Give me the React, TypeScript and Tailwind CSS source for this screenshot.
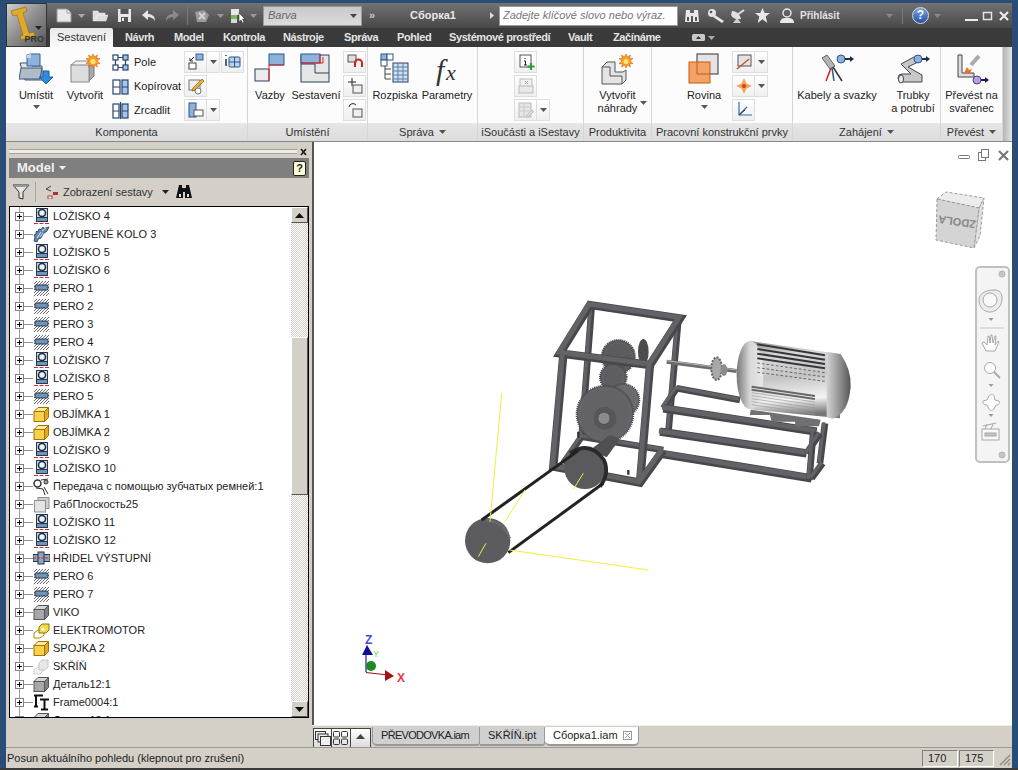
import React from 'react';

const font = "font-['Liberation_Sans',sans-serif]";

const Arrow = ({ color = '#555' }: { color?: string }) => (
  <svg width="7" height="4" viewBox="0 0 7 4" className="shrink-0"><path d="M0 0h7L3.500 4z" fill={color} /></svg>
);

// ---- tree icons ----
const Bearing = () => (
  <svg width="17" height="17" viewBox="0 0 17 17">
    <rect x="3" y="0" width="12" height="14" fill="#27384f" />
    <rect x="4" y="1" width="10" height="8" fill="#c9d4de" />
    <circle cx="9" cy="5" r="3.500" fill="#eef3f7" stroke="#1c2c42" strokeWidth="1.500" />
    <rect x="4" y="10" width="10" height="3" fill="#6f95bd" />
    <path d="M1 15.500h16" stroke="#c9302c" strokeDasharray="4 1.500" />
  </svg>
);
const Gear = () => (
  <svg width="17" height="17" viewBox="0 0 17 17">
    <path d="M1 15l1-4-1-2 2-1V5.500h2L6 3l2 .5L10 1l1 1.500L16 1l-2 4-4 3-2 4-3 1-1 3z" fill="#5f86b4" stroke="#22364f" strokeWidth=".8" />
    <path d="M4 12l4-6M7 11l3-4M9 5l4-3" stroke="#d8e3ee" />
  </svg>
);
const KeyIcon = () => (
  <svg width="17" height="17" viewBox="0 0 17 17">
    <path d="M1 4l3-3M1 7l6-6M1 10l9-9M1 13L13 1M1 16L16 1M4 16L16 4M7 16l9-9M10 16l6-6M13 16l3-3" stroke="#444" strokeWidth=".8" />
    <rect x="2" y="5" width="13" height="5" rx="1" fill="#6f94b8" stroke="#25364c" />
  </svg>
);
const Cube = ({ face, top, side, line }: { face: string; top: string; side: string; line: string }) => (
  <svg width="17" height="17" viewBox="0 0 17 17">
    <path d="M1 5.500L5 1.500h10.500l-4 4z" fill={top} stroke={line} />
    <path d="M11.500 5.500l4-4v10l-4 4z" fill={side} stroke={line} />
    <rect x="1" y="5.500" width="10.500" height="10" fill={face} stroke={line} />
  </svg>
);
const GrayCube = () => <Cube face="#a8a8a8" top="#d4d4d4" side="#808080" line="#555" />;
const YellowCube = () => <Cube face="#f7d24a" top="#fdeb9a" side="#e0ac28" line="#a66f00" />;
const SmallYellow = () => (
  <svg width="17" height="17" viewBox="0 0 17 17">
    <path d="M1 11l4-3h6v5l-4 3H1z" fill="#fff" stroke="#b48a00" />
    <path d="M6 5l3-3h7v6l-3 3H6z" fill="#f3d94c" stroke="#8a7400" />
    <circle cx="10" cy="7" r="1.500" fill="#fff" />
  </svg>
);
const Ghost = () => (
  <svg width="17" height="17" viewBox="0 0 17 17">
    <path d="M1 12l4-3h5v4l-3 3H1z" fill="#f2f2f2" stroke="#d0d0d0" />
    <path d="M6 5l3-3h6v7l-3 3H6z" fill="#e8e8e8" stroke="#c4c4c4" />
  </svg>
);
const Belt = () => (
  <svg width="17" height="17" viewBox="0 0 17 17">
    <circle cx="4.500" cy="5.500" r="3.500" fill="#fff" stroke="#333" strokeWidth="1.500" />
    <circle cx="13" cy="4" r="2" fill="#9ab" stroke="#333" />
    <path d="M3 10l7 1M8 2l7-1M10 11l2 6M11 9l4 7" stroke="#333" fill="none" />
  </svg>
);
const PlaneIcon = () => (
  <svg width="17" height="17" viewBox="0 0 17 17">
    <rect x="5" y="1.500" width="11" height="11" fill="#d0d0d0" stroke="#8f8f8f" />
    <rect x="1.500" y="4.500" width="11" height="11.500" fill="#e4e4e4" stroke="#8f8f8f" />
  </svg>
);
const Shaft = () => (
  <svg width="17" height="17" viewBox="0 0 17 17">
    <rect x="0" y="4.500" width="17" height="7" fill="#8ea5c2" stroke="#22324a" />
    <rect x="5" y="2" width="6" height="12" fill="#8ea5c2" stroke="#22324a" />
    <path d="M0 8h17" stroke="#c9302c" strokeDasharray="3 1" />
  </svg>
);
const Frame = () => (
  <svg width="17" height="17" viewBox="0 0 17 17">
    <path d="M1 1.500h9M3 1.500v11M1 12.500h4M7 5.500h9M11.500 5.500v10M8 15.500h7" stroke="#111" strokeWidth="2" fill="none" />
  </svg>
);

const icons: Record<string, () => React.ReactElement> = {
  b: Bearing, g: Gear, k: KeyIcon, c: GrayCube, y: YellowCube, e: SmallYellow, s: Ghost, t: Belt, p: PlaneIcon, h: Shaft, f: Frame,
};

const treeRows: [string, string][] = [
  ['b', 'LOŽISKO 4'], ['g', 'OZYUBENÉ KOLO 3'], ['b', 'LOŽISKO 5'], ['b', 'LOŽISKO 6'],
  ['k', 'PERO 1'], ['k', 'PERO 2'], ['k', 'PERO 3'], ['k', 'PERO 4'],
  ['b', 'LOŽISKO 7'], ['b', 'LOŽISKO 8'], ['k', 'PERO 5'], ['y', 'OBJÍMKA 1'], ['y', 'OBJÍMKA 2'],
  ['b', 'LOŽISKO 9'], ['b', 'LOŽISKO 10'], ['t', 'Передача с помощью зубчатых ремней:1'], ['p', 'РабПлоскость25'],
  ['b', 'LOŽISKO 11'], ['b', 'LOŽISKO 12'], ['h', 'HŘIDEL VÝSTUPNÍ'], ['k', 'PERO 6'], ['k', 'PERO 7'],
  ['c', 'VIKO'], ['e', 'ELEKTROMOTOR'], ['y', 'SPOJKA 2'], ['s', 'SKŘÍŇ'], ['c', 'Деталь12:1'], ['f', 'Frame0004:1'], ['c', 'Деталь13:1'],
];

const TreeRow = ({ icon, label }: { icon: string; label: string }) => {
  const Icon = icons[icon];
  return (
    <div className="flex items-center h-[18px] relative shrink-0">
      <div className="absolute left-[9px] top-0 bottom-0 border-l border-[#a0a0a0]" />
      <div className="relative ml-[5px] w-[9px] h-[9px] border border-[#808080] bg-white flex items-center justify-center">
        <svg width="7" height="7" viewBox="0 0 7 7"><path d="M1 3.500h5M3.500 1v5" stroke="#000" /></svg>
      </div>
      <div className="w-[9px] border-t border-[#909090]" />
      <div className="w-[17px] h-[17px] shrink-0"><Icon /></div>
      <span className="ml-[3px] text-[11px] text-[#222] whitespace-nowrap">{label}</span>
    </div>
  );
};

// ---- ribbon icons ----
const UmistitIcon = () => (
  <svg width="34" height="32" viewBox="0 0 34 32">
    <path d="M1 10h10l2 3h10v14H6z" fill="#e4e4e4" stroke="#3e5674" />
    <path d="M8 2l4-1h9v12H8z" fill="#8db2dc" stroke="#3a5f8c" />
    <path d="M8 2l4-1v4H8z" fill="#c4d8ee" />
    <path d="M0 26l2-11h21l-2 11z" fill="#aebccb" stroke="#3e5674" />
    <path d="M24 18h6v6h4l-7 7-7-7h4z" fill="#2f8be0" stroke="#1b5e9f" />
  </svg>
);
const CubeStar = ({ w = 34 }: { w?: number }) => (
  <svg width={w} height="32" viewBox="0 0 34 32">
    <path d="M3 12l5-4h18v2l-5 4z" fill="#f2f2f2" stroke="#888" />
    <path d="M21 14l5-4v13l-5 5z" fill="#aaa" stroke="#777" />
    <rect x="3" y="12" width="18" height="17" fill="#ddd" stroke="#888" />
    <path d="M25 1l1.500 3 3-2-1 3.500H32l-3 2.500 3 2.500-3.500.5 1 3-3-2-1.500 3-1.500-3-3 2 1-3-3.500-.5 3-2.500-3-2.500h3.500l-1-3.500 3 2z" fill="#f7a21b" stroke="#d9480f" strokeWidth=".5" />
    <circle cx="25" cy="8.500" r="2.500" fill="#ffe680" />
  </svg>
);
const SmallGrid = ({ kind }: { kind: string }) => (
  <svg width="17" height="17" viewBox="0 0 17 17" fill="#fff" stroke="#25456e" strokeWidth="1.200">
    {kind === 'pole' && <>
      <rect x="1" y="1" width="5" height="5" /><rect x="11" y="1" width="5" height="5" fill="#a9c5e6" />
      <rect x="1" y="11" width="5" height="5" /><rect x="11" y="11" width="5" height="5" fill="#a9c5e6" />
      <path d="M6 3.500h5M3.500 6v5M13.500 6v5M6 13.500h5" />
    </>}
    {kind === 'kop' && <>
      <rect x="1" y="2" width="7" height="14" /><rect x="10" y="2" width="6" height="14" fill="#a9c5e6" />
      <path d="M1 9h7M10 9h6" />
    </>}
    {kind === 'zrc' && <>
      <rect x="1" y="2" width="6" height="14" /><rect x="10" y="2" width="6" height="14" fill="#a9c5e6" />
      <path d="M8.500 0v17M1 9h6M10 9h6" />
    </>}
  </svg>
);
const Sb = ({ children, arrow, className = '' }: { children?: React.ReactNode; arrow?: boolean; className?: string }) => (
  <div className={`flex h-[22px] shrink-0 ${className}`}>
    <div className="w-[23px] h-[22px] border border-[#dedede] bg-gradient-to-b from-white to-[#efefef] flex items-center justify-center">{children}</div>
    {arrow && <div className="w-[13px] h-[22px] border border-l-0 border-[#dedede] bg-gradient-to-b from-white to-[#efefef] flex items-center justify-center"><Arrow /></div>}
  </div>
);
const G = ({ children }: { children: React.ReactNode }) => (
  <svg width="18" height="18" viewBox="0 0 18 18" fill="none">{children}</svg>
);
const Big = ({ w, ml = 0, label, icon, drop }: { w: number; ml?: number; label: React.ReactNode; icon: React.ReactNode; drop?: boolean }) => (
  <div style={{ width: w, marginLeft: ml }} className="shrink-0 flex flex-col items-center pt-[6px]">
    <div className="h-[36px] flex items-start justify-center">{icon}</div>
    <div className="text-[11px] leading-[13px] text-center text-[#222] whitespace-nowrap">{label}</div>
    {drop && <div className="mt-[3px]"><Arrow /></div>}
  </div>
);
const Panel = ({ w, title, arrow, children }: { w: number; title: string; arrow?: boolean; children: React.ReactNode }) => (
  <div style={{ width: w }} className="shrink-0 flex flex-col border-r border-[#d6d6d6]">
    <div className="h-[76px] flex">{children}</div>
    <div className="h-[18px] bg-gradient-to-b from-[#e6e6e6] to-[#dcdcdc] flex items-center justify-center gap-[5px] text-[11px] text-[#333] whitespace-nowrap">
      {title}{arrow && <Arrow />}
    </div>
  </div>
);
const SmallLabel = ({ kind, label }: { kind: string; label: string }) => (
  <div className="h-[24px] flex items-center gap-[5px] text-[11px] text-[#222] whitespace-nowrap"><SmallGrid kind={kind} />{label}</div>
);
const BtnCol = ({ children, ml }: { children: React.ReactNode; ml: number }) => (
  <div style={{ marginLeft: ml }} className="shrink-0 flex flex-col gap-[2px] pt-[4px]">{children}</div>
);

const Ribbon = () => (
  <div className="h-[94px] flex bg-[#fcfcfc] shrink-0">
    <Panel w={242} title="Komponenta">
      <Big w={40} ml={10} label="Umístit" icon={<UmistitIcon />} drop />
      <Big w={40} ml={9} label="Vytvořit" icon={<CubeStar />} />
      <div className="ml-[7px] w-[72px] shrink-0 pt-[3px]">
        <SmallLabel kind="pole" label="Pole" /><SmallLabel kind="kop" label="Kopírovat" /><SmallLabel kind="zrc" label="Zrcadlit" />
      </div>
      <div className="shrink-0 flex flex-col gap-[2px] pt-[4px]">
        <div className="flex gap-[1px]">
          <Sb arrow><G><rect x="9" y="1" width="7" height="6" fill="#8db2dc" stroke="#3a5f8c" /><rect x="2" y="10" width="7" height="6" fill="#fff" stroke="#444" /><path d="M3 8l4-4M3 5v3h3" stroke="#333" /></G></Sb>
          <Sb><G><path d="M2 2v1M2 6v7" stroke="#234" strokeWidth="1.500" /><rect x="5" y="4" width="11" height="10" rx="1" fill="#bcd3ec" stroke="#2c5587" /><path d="M5 9h11M10.500 4v10" stroke="#2c5587" /></G></Sb>
        </div>
        <Sb><G><rect x="2" y="3" width="11" height="10" fill="#eee" stroke="#777" /><path d="M6 11l9-9 2 2-9 9-3 1z" fill="#e8b23a" stroke="#8a5a00" strokeWidth=".7" /><circle cx="11" cy="14" r="3" fill="#fff" stroke="#777" /></G></Sb>
        <Sb arrow><G><rect x="2" y="2" width="7" height="14" fill="#8db2dc" stroke="#2c5587" /><rect x="7" y="9" width="9" height="6" fill="#fff" stroke="#555" /></G></Sb>
      </div>
    </Panel>
    <Panel w={120} title="Umístění">
      <Big w={40} ml={2} label="Vazby" icon={
        <svg width="32" height="32" viewBox="0 0 32 32"><rect x="15" y="1" width="15" height="11" fill="#8db2dc" stroke="#2c5587" /><rect x="1" y="16" width="14" height="12" fill="#ececec" stroke="#2c3f58" /><path d="M15 12h15M15 12v16" stroke="#e02020" /></svg>
      } />
      <Big w={52} label="Sestavení" icon={
        <svg width="32" height="32" viewBox="0 0 32 32"><rect x="1" y="2" width="28" height="27" fill="#e6e6e6" stroke="#2c3f58" /><path d="M1 11h14v9h14" fill="none" stroke="#2c3f58" /><rect x="1" y="1" width="19" height="9" fill="#8db2dc" stroke="#2c5587" /><path d="M1 10h19V1M20 10h3V4" stroke="#e02020" fill="none" /></svg>
      } />
      <BtnCol ml={1}>
        <Sb><G><rect x="2" y="2" width="8" height="7" fill="#ddd" stroke="#555" /><path d="M9 14v-4a3.500 3.500 0 017 0v4" stroke="#d02020" strokeWidth="2" /></G></Sb>
        <Sb><G><path d="M6 1v8M2 5h8" stroke="#222" /><rect x="7" y="8" width="9" height="8" fill="#eee" stroke="#555" /></G></Sb>
        <Sb><G><path d="M3 6a4 4 0 017-2" stroke="#222" /><rect x="7" y="8" width="9" height="8" fill="#eee" stroke="#555" /></G></Sb>
      </BtnCol>
    </Panel>
    <Panel w={110} title="Správa" arrow>
      <Big w={48} ml={3} label="Rozpiska" icon={
        <svg width="32" height="32" viewBox="0 0 32 32"><rect x="2" y="1" width="6" height="6" fill="#8db2dc" stroke="#2c5587" /><rect x="8" y="1" width="6" height="6" fill="#fff" stroke="#2c5587" /><rect x="2" y="7" width="6" height="6" fill="#fff" stroke="#2c5587" /><path d="M6 13v13M6 16h6M6 21h6M6 26h6" stroke="#444" /><rect x="14" y="10" width="15" height="19" fill="#cfe0f2" stroke="#2c3f58" /><path d="M14 14h15M14 18h15M14 22h15M14 26h15M19 10v19M24 10v19" stroke="#5b7ea6" /></svg>
      } />
      <Big w={56} label="Parametry" icon={
        <svg width="36" height="35" viewBox="0 0 36 35"><text x="7" y="27" fontFamily="Liberation Serif" fontStyle="italic" fontSize="30" fill="#333">f</text><text x="17" y="27" fontFamily="Liberation Serif" fontStyle="italic" fontSize="22" fill="#333">x</text></svg>
      } />
    </Panel>
    <Panel w={106} title="iSoučásti a iSestavy">
      <BtnCol ml={36}>
        <Sb><G><rect x="3" y="2" width="11" height="12" fill="#fff" stroke="#555" /><path d="M8 5v1M7 8h1.500v4M7 12h3" stroke="#222" /><path d="M14 10v7M10.500 13.500h7" stroke="#2e9b3a" strokeWidth="2" /></G></Sb>
        <Sb><G><rect x="3" y="2" width="12" height="8" fill="#f0f0f0" stroke="#bbb" /><rect x="2" y="9" width="14" height="7" fill="#e8e8e8" stroke="#bbb" /><path d="M8 4l3 3M11 4L8 7" stroke="#aaa" /></G></Sb>
        <Sb arrow><G><rect x="2" y="2" width="12" height="14" fill="#e6e6e6" stroke="#bbb" /><path d="M2 6h12M2 10h12M7 2v14" stroke="#ccc" /><path d="M9 15l6-6 1.500 1.500-6 6z" fill="#ddd" stroke="#bbb" /></G></Sb>
      </BtnCol>
    </Panel>
    <Panel w={68} title="Produktivita">
      <div className="w-full relative">
        <Big w={67} label={<>Vytvořit<br />náhrady</>} icon={
          <svg width="36" height="34" viewBox="0 0 36 34"><path d="M2 14l5-5h8v10h8l3-2v10l-4 4H2z" fill="#e4e4e4" stroke="#555" /><path d="M2 14h8v9h12v8" fill="none" stroke="#555" /><path d="M26 1l1.500 3 3-2-1 3.500H33l-3 2.500 3 2.500-3.500.5 1 3-3-2-1.500 3-1.500-3-3 2 1-3-3.500-.5 3-2.500-3-2.500h3.500l-1-3.500 3 2z" fill="#f7a21b" stroke="#d9480f" strokeWidth=".5" /><circle cx="26" cy="8.500" r="2.500" fill="#ffe680" /></svg>
        } />
        <div className="absolute left-[56px] top-[54px]"><Arrow /></div>
      </div>
    </Panel>
    <Panel w={141} title="Pracovní konstrukční prvky">
      <Big w={40} ml={32} label="Rovina" icon={
        <svg width="32" height="32" viewBox="0 0 32 32"><rect x="9" y="1" width="21" height="20" fill="#e4e4e8" stroke="#333" /><rect x="1" y="9" width="21" height="21" fill="#f3a365" stroke="#c8590f" /><path d="M9 9v12h13" fill="none" stroke="#c8590f" /></svg>
      } drop />
      <BtnCol ml={8}>
        <Sb arrow><G><rect x="3" y="2" width="13" height="11" fill="#e4e4e4" stroke="#555" /><path d="M2 16L14 6" stroke="#c0562a" strokeWidth="1.500" /></G></Sb>
        <Sb arrow><G><path d="M9 1l2.500 5.500L17 9l-5.500 2.500L9 17l-2.500-5.500L1 9l5.500-2.500z" fill="#f5a45a" /><circle cx="9" cy="9" r="2" fill="#c8402a" /></G></Sb>
        <Sb><G><path d="M4 1v13h13M4 14l8-8" stroke="#2c6fb0" strokeWidth="1.200" /><path d="M4 14l6-5" stroke="#333" /></G></Sb>
      </BtnCol>
    </Panel>
    <Panel w={148} title="Zahájení" arrow>
      <Big w={88} label="Kabely a svazky" icon={
        <svg width="34" height="34" viewBox="0 0 34 34"><path d="M2 5l5-3 8 11-5 3z" fill="#b5b5b5" stroke="#666" /><path d="M11 15l-5 13" stroke="#d02020" strokeWidth="1.500" /><path d="M12 15l2 13" stroke="#2c5587" strokeWidth="1.500" /><path d="M13 14l9 14" stroke="#333" strokeWidth="1.500" /><circle cx="21" cy="6" r="4" fill="#8db2dc" stroke="#2c5587" /><path d="M25 6h6" stroke="#1a2d4a" strokeWidth="2" /><path d="M30 3l4 3-4 3z" fill="#1a2d4a" /></svg>
      } />
      <Big w={54} ml={5} label={<>Trubky<br />a potrubí</>} icon={
        <svg width="34" height="34" viewBox="0 0 34 34"><path d="M5 11L18 4l4 5-10 5 14 8v7H6a3 3 0 010-8h9z" fill="#c8c8cc" stroke="#444" /><ellipse cx="5" cy="26" rx="2.500" ry="4" fill="#eee" stroke="#444" /><circle cx="22" cy="6" r="4" fill="#8db2dc" stroke="#2c5587" /><path d="M26 6h5" stroke="#1a2d4a" strokeWidth="2" /><path d="M30 3l4 3-4 3z" fill="#1a2d4a" /></svg>
      } />
    </Panel>
    <Panel w={62} title="Převést" arrow>
      <Big w={61} label={<>Převést na<br />svařenec</>} icon={
        <svg width="34" height="34" viewBox="0 0 34 34"><path d="M3 2h4v18h12v4H3z" fill="#ddd" stroke="#444" /><path d="M9 20l3-6 2 3 3-1-2 4z" fill="#f0701e" /><path d="M16 12l8-9" stroke="#aaa" strokeWidth="4" /><circle cx="22" cy="27" r="4" fill="#b9a0dc" stroke="#5a3a96" /><path d="M26 27h5" stroke="#1a1a5a" strokeWidth="2" /><path d="M30 24l4 3-4 3z" fill="#1a1a5a" /></svg>
      } />
    </Panel>
    <div className="flex-1 bg-gradient-to-r from-[#b4b4b4] to-[#e4e4e4]" />
  </div>
);

// ---- title row ----
const Qa = ({ w, children }: { w: number; children?: React.ReactNode }) => (
  <div style={{ width: w }} className="h-full shrink-0 flex items-center justify-center">{children}</div>
);
const tabNames = [['Návrh', 49], ['Model', 49], ['Kontrola', 60], ['Nástroje', 61], ['Správa', 53], ['Pohled', 52], ['Systémové prostředí', 119], ['Vault', 45], ['Začínáme', 79]] as [string, number][];

const TitleRow = () => (
  <div className="h-[25px] flex items-center bg-gradient-to-b from-[#727272] to-[#484848] shrink-0 pl-[7px]">
    <Qa w={20}><svg width="16" height="15" viewBox="0 0 16 15"><path d="M1 1h10l4 4v9H1z" fill="#e8e8e8" stroke="#999" /><path d="M11 1v4h4" fill="#fff" stroke="#999" /></svg></Qa>
    <Qa w={14}><Arrow color="#aaa" /></Qa>
    <Qa w={24}><svg width="16" height="13" viewBox="0 0 16 13"><path d="M1 12V2h5l1 2h6v2H5l-2 6zM3 12l2-6h11l-2 6z" fill="#ddd" stroke="#eee" strokeWidth=".5" /></svg></Qa>
    <Qa w={24}><svg width="15" height="15" viewBox="0 0 15 15"><path d="M1 1h13v13H1z" fill="#e8e8e8" /><rect x="3.500" y="1" width="8" height="5" fill="#555" /><rect x="4" y="9" width="7" height="5" fill="#555" /><rect x="5" y="10" width="2" height="3" fill="#eee" /></svg></Qa>
    <Qa w={24}><svg width="15" height="12" viewBox="0 0 15 12"><path d="M7 0L1 5l6 5V7c3 0 5 1 7 4 0-5-3-7-7-7z" fill="#e6e6e6" /></svg></Qa>
    <Qa w={24}><svg width="15" height="12" viewBox="0 0 15 12"><path d="M8 0l6 5-6 5V7C5 7 3 8 1 11c0-5 3-7 7-7z" fill="#8a8a8a" /></svg></Qa>
    <div className="w-px h-[18px] bg-[#7a7a7a] ml-[3px] mr-[6px]" />
    <Qa w={16}><svg width="16" height="14" viewBox="0 0 16 14"><path d="M1 3l9-2 5 5-3 7H3z" fill="#9a9a9a" /><path d="M5 4l6 6M11 4l-6 6" stroke="#d4d4d4" strokeWidth="2" /></svg></Qa>
    <Qa w={20}><Arrow color="#999" /></Qa>
    <Qa w={16}><svg width="16" height="16" viewBox="0 0 16 16"><rect x="1" y="1" width="8" height="6" fill="#e8e8e8" /><rect x="1" y="7" width="6" height="4" fill="#6fbf4a" /><rect x="1" y="11" width="6" height="4" fill="#d8d8d8" /><path d="M9 5v9l2-2 1.500 3 1.500-1-1.500-3H15z" fill="#fff" stroke="#222" strokeWidth=".5" /></svg></Qa>
    <Qa w={14}><Arrow color="#999" /></Qa>
    <div className="w-[99px] h-[20px] ml-[3px] shrink-0 bg-gradient-to-b from-[#c8c8c8] to-[#dcdcdc] border border-[#9a9a9a] flex items-center justify-between pl-[4px] pr-[4px] text-[11px] italic text-[#666]">Barva<Arrow color="#444" /></div>
    <div className="w-[20px] shrink-0 text-center text-[11px] font-bold text-[#ccc] leading-none">»</div>
    <div className="w-[102px] shrink-0 text-center text-[11px] font-bold text-[#e8e8e8]">Сборка1</div>
    <svg width="4" height="7" viewBox="0 0 4 7" className="ml-[6px] mr-[5px] shrink-0"><path d="M0 0l4 3.500L0 7z" fill="#ddd" /></svg>
    <div className="w-[179px] h-[20px] shrink-0 bg-white border border-[#9a9a9a] flex items-center pl-[3px] text-[11px] italic text-[#777] whitespace-nowrap overflow-hidden">Zadejte klíčové slovo nebo výraz.</div>
    <Qa w={28}><svg width="16" height="16" viewBox="0 0 16 16" fill="#e8e8e8"><path d="M2 2h4v3h4V2h4l1 12H9V8H7v6H1z" /><path d="M3 9h2v4H3zM11 9h2v4h-2z" fill="#555" /></svg></Qa>
    <Qa w={20}><svg width="18" height="15" viewBox="0 0 18 15"><circle cx="5" cy="5" r="4" fill="#e4e4e4" /><circle cx="4" cy="4" r="1.300" fill="#555" /><path d="M8 7l9 6-2 2-9-6z" fill="#e4e4e4" /></svg></Qa>
    <Qa w={25}><svg width="17" height="16" viewBox="0 0 17 16"><path d="M2 3c5 0 8 4 9 8-4 1-8 0-10-4z" fill="#e0e0e0" /><path d="M7 7l7-5" stroke="#e0e0e0" strokeWidth="2" /><path d="M3 15l4-5 4 5z" fill="#d0d0d0" /></svg></Qa>
    <Qa w={23}><svg width="15" height="15" viewBox="0 0 15 15"><path d="M7.500 0l2.200 5H15l-4.300 3.400L12.300 15 7.500 11.300 2.700 15l1.600-6.600L0 5h5.300z" fill="#e8e8e8" /></svg></Qa>
    <Qa w={26}><svg width="16" height="16" viewBox="0 0 16 16"><circle cx="8" cy="5" r="4" fill="none" stroke="#e8e8e8" strokeWidth="1.500" /><path d="M1 15c0-4 3-5 5-5h4c2 0 5 1 5 5z" fill="#e8e8e8" /></svg></Qa>
    <div className="text-[10px] font-bold text-[#e2e2e2] w-[86px] shrink-0">Přihlásit</div>
    <Arrow color="#888" />
    <div className="w-px h-[16px] bg-[#7a7a7a] ml-[9px] mr-[9px] shrink-0" />
    <div className="w-[17px] h-[17px] shrink-0 rounded-full bg-gradient-to-b from-[#7aa7e0] to-[#2a4fa0] border border-[#d8d8d8] text-white text-[12px] font-bold leading-[15px] text-center">?</div>
    <div className="ml-[5px] mr-[24px]"><Arrow color="#888" /></div>
    <svg width="44" height="10" viewBox="0 0 44 10" className="shrink-0"><path d="M0 9h13" stroke="#eee" strokeWidth="2" /><rect x="18.500" y="1.500" width="8" height="7" fill="none" stroke="#e4e4e4" strokeWidth="1.500" /><path d="M35 1l8 8M43 1l-8 8" stroke="#eee" strokeWidth="2" /></svg>
  </div>
);

const TabRow = () => (
  <div className="h-[19px] flex items-end bg-[#3a3a3a] shrink-0 pl-[3px] text-[11px] font-bold text-[#e4e4e4] tracking-[-0.4px]">
    <div className="w-[63px] h-[19px] mr-[12px] bg-gradient-to-b from-[#e8e8e8] to-[#fcfcfc] rounded-t-[2px] flex items-center justify-center text-[#333] font-normal tracking-normal">Sestavení</div>
    {tabNames.map(([n, w]) => (
      <div key={n} style={{ width: w }} className="h-[19px] flex items-center whitespace-nowrap shrink-0">{n}</div>
    ))}
    <div className="h-[19px] flex items-center gap-[3px]">
      <svg width="13" height="7" viewBox="0 0 13 7"><rect width="13" height="7" rx="1.500" fill="#c8c8c8" /><path d="M4 5l2.500-3L9 5z" fill="#333" /></svg><Arrow color="#aaa" />
    </div>
  </div>
);

// ---- viewport scene, coordinates are the 3x crop's ----
const Beam = ({ d, w = 25 }: { d: string; w?: number }) => (
  <>
    <path d={d} stroke="#48484c" strokeWidth={w} fill="none" strokeLinejoin="miter" />
    <path d={d} stroke="#626267" strokeWidth={w - 10} fill="none" strokeLinejoin="miter" transform="translate(-3 -3)" />
  </>
);
const GearShape = ({ cx, cy, r, fill = '#5c5c60' }: { cx: number; cy: number; r: number; fill?: string }) => (
  <>
    <circle cx={cx} cy={cy} r={r} fill={fill} />
    <circle cx={cx} cy={cy} r={r} fill="none" stroke="#46464a" strokeWidth="6" strokeDasharray="3 3" />
    <circle cx={cx} cy={cy} r={r - 9} fill="none" stroke="#77777b" strokeWidth="2" strokeDasharray="2 3" />
  </>
);
const fins = [0, 1, 2, 3, 4, 5, 6];

const Scene = () => (
  <svg className="absolute inset-0" width="698" height="583" viewBox="314 142 698 583">
    <defs>
      <linearGradient id="motor" x1="0" y1="0" x2="0.1" y2="1">
        <stop offset="0" stopColor="#8d8d8d" /><stop offset=".2" stopColor="#d8d8d8" /><stop offset=".5" stopColor="#c4c4c4" /><stop offset=".8" stopColor="#f4f4f4" /><stop offset="1" stopColor="#777" />
      </linearGradient>
      <linearGradient id="cap" x1="0" y1="0" x2="1" y2="0">
        <stop offset="0" stopColor="#d4d4d4" /><stop offset=".6" stopColor="#8a8a8a" /><stop offset="1" stopColor="#555" />
      </linearGradient>
      <linearGradient id="endc" x1="0" y1="0" x2="1" y2="0">
        <stop offset="0" stopColor="#777" /><stop offset=".5" stopColor="#d8d8d8" /><stop offset="1" stopColor="#e8e8e8" />
      </linearGradient>
    </defs>
    <g transform="translate(450 290) scale(.3333)">
      {/* back of the frame */}
      <Beam d="M425 50L395 440M685 90L655 430" w={20} />
      <Beam d="M395 440L640 480M340 520L395 440" w={20} />
      {/* motor stand */}
      <Beam d="M680 295L870 330M1125 400L1110 520M640 355L680 295" w={20} />
      <Beam d="M640 355L1100 425M630 425L1070 490M625 490L1085 565" />
      <Beam d="M1090 425L1078 570M1070 490L1110 430M1085 565L1118 520" w={20} />
      {/* gears */}
      <GearShape cx={505} cy={200} r={50} />
      <ellipse cx="580" cy="185" rx="16" ry="38" fill="#4c4c50" />
      <GearShape cx={490} cy={262} r={40} fill="#5e5e62" />
      <GearShape cx={520} cy={330} r={48} fill="#6a6a6e" />
      <GearShape cx={465} cy={372} r={85} fill="#636367" />
      <circle cx="465" cy="385" r="34" fill="#55555a" />
      <circle cx="462" cy="385" r="18" fill="#8a8a8e" stroke="#3c3c40" strokeWidth="3" strokeDasharray="3 3" />
      <path d="M420 480l60-45 30 12-40 55z" fill="#505054" />
      <path d="M385 425v18M535 540v14" stroke="#333" strokeWidth="7" />
      {/* front of the frame */}
      <Beam d="M420 45L690 85L600 225L330 190Z" />
      <Beam d="M340 195L310 530L570 578L640 480M600 225L570 578" />
      {/* shaft and coupling */}
      <path d="M650 215L860 243" stroke="#6c6c6c" strokeWidth="12" />
      <path d="M650 212L860 240" stroke="#b5b5b5" strokeWidth="3" />
      <ellipse cx="800" cy="236" rx="16" ry="34" fill="#a8a8a8" stroke="#666" strokeWidth="6" strokeDasharray="6 4" />
      <ellipse cx="822" cy="240" rx="10" ry="18" fill="#8c8c8c" />
      {/* motor */}
      <path d="M900 375h60l5 20h70l2 14h70l5-20-210-30z" fill="#707074" />
      <path d="M900 153L1170 192V385L900 358Z" fill="url(#motor)" />
      <ellipse cx="900" cy="255" rx="40" ry="102" fill="url(#endc)" />
      <path d="M1130 186L1172 192Q1205 240 1202 290Q1196 370 1148 386L1130 382Z" fill="url(#cap)" />
      {fins.map(i => <path key={i} d={`M${922} ${163 + i * 14}L1125 ${196 + i * 13}`} stroke="#35353a" strokeWidth={i < 4 ? 6 : 2} strokeDasharray={i < 4 ? undefined : '8 6'} />)}
      {fins.map(i => <path key={i} d={`M905 ${290 + i * 9}L1095 ${318 + i * 9}`} stroke={i < 2 ? '#666' : '#9a9a9a'} strokeWidth={i < 2 ? 6 : 2} />)}
      {/* pulleys and belt */}
      <circle cx="405" cy="535" r="62" fill="#5a5a5e" />
      <path d="M360 490Q420 450 462 510Q480 550 450 590" fill="none" stroke="#2a2a2a" strokeWidth="11" />
      <circle cx="113" cy="752" r="68" fill="#5c5c60" />
      <path d="M95 690L385 482" stroke="#222" strokeWidth="9" />
      <path d="M175 788L460 580" stroke="#222" strokeWidth="9" />
      <path d="M110 692Q160 695 180 745" fill="none" stroke="#777" strokeWidth="7" strokeDasharray="3 3" />
      {/* yellow work features */}
      <g stroke="#f4ec3a" strokeWidth="3" fill="none">
        <path d="M155 310L120 695" />
        <path d="M165 695L225 600" />
        <path d="M178 780L595 840" />
        <path d="M85 800L108 760" />
        <path d="M370 598L400 550" />
      </g>
    </g>
    {/* triad */}
    <path d="M366 672V652" fill="none" stroke="#1a1a9a" strokeWidth="1.200" />
    <path d="M366 672.500L388 675" stroke="#a01010" strokeWidth="1.200" />
    <path d="M362 655l5-10 6 10z" fill="#0e0e96" />
    <path d="M385 670l9 6-9 5z" fill="#a81010" />
    <circle cx="371" cy="666" r="5" fill="#1f8a1f" />
  </svg>
);

const ViewportOverlays = () => (
  <>
    <Scene />
    {/* triad labels */}
    <span className="absolute left-[51px] top-[492px] text-[12px] font-bold text-[#4a4ad0] leading-none">Z</span>
    <span className="absolute left-[59px] top-[508px] text-[9px] text-[#6cd06c] leading-none">Y</span>
    <span className="absolute left-[83px] top-[530px] text-[12px] font-bold text-[#e83a4a] leading-none">X</span>
    {/* window buttons */}
    <div className="absolute left-[644px] top-[7px]">
      <svg width="52" height="13" viewBox="0 0 52 13" fill="none" stroke="#777"><rect x=".5" y="6.500" width="11" height="3" rx="1" /><rect x="20.500" y="3.500" width="7" height="8" /><rect x="23.500" y=".5" width="7" height="8" fill="#fff" /><path d="M41 2l9 9M50 2l-9 9" strokeWidth="2.200" /></svg>
    </div>
    {/* view cube */}
    <div className="absolute left-[620px] top-[47px]">
      <svg width="56" height="62" viewBox="0 0 56 62">
        <path d="M3 10L12 3l38 6-5 10z" fill="#ececec" stroke="#999" strokeDasharray="3 2" />
        <path d="M45 19l5-10-4 38-6 12z" fill="#e0e0e0" stroke="#999" strokeDasharray="3 2" />
        <path d="M3 10l42 9-5 40-38-8z" fill="#d4d4d4" stroke="#999" strokeDasharray="3 2" />
        <text transform="rotate(188 23 33)" x="23" y="37" textAnchor="middle" fontFamily="Liberation Sans" fontSize="11" fontWeight="700" fill="#888">ZDOLA</text>
      </svg>
    </div>
    {/* navigation bar */}
    <div className="absolute left-[661px] top-[124px] w-[35px] h-[197px] rounded-[5px] border-2 border-[#c0c0c0] bg-[#f4f4f4] flex flex-col items-center">
      <svg width="31" height="193" viewBox="0 0 31 193" fill="none" stroke="#a8a8a8">
        <circle cx="25" cy="6" r="3" fill="#c4c4c4" stroke="#b4b4b4" />
        <path d="M17 22c6 0 8 3 8 9s-5 13-12 13-11-6-11-12 6-10 15-10z" fill="#ececec" />
        <circle cx="13" cy="32" r="7" fill="#f8f8f8" />
        <path d="M14 53l-2.500-3h5z" fill="#999" stroke="none" />
        <path d="M3 60h24" stroke="#c4c4c4" />
        <path d="M9 83l-4-8 2-1 3 3 1-9h1l1 7 1-8h1l1 8 2-7h1l-1 9 3-4 1 1-4 9z" fill="#fff" />
        <circle cx="13" cy="100" r="5.500" fill="#fff" /><path d="M17 104l6 6" strokeWidth="2" />
        <path d="M14 119l-2.500-3h5z" fill="#999" stroke="none" />
        <path d="M12 128c2-2 4-2 5 0l1 4 4 1c1 2 0 4-3 4l-2 4c-1 2-4 2-5 0l-2-4c-3 0-5-2-4-4l4-1z" fill="#fff" />
        <path d="M14 149l-2.500-3h5z" fill="#999" stroke="none" />
        <rect x="5" y="161" width="17" height="11" fill="#f8f8f8" /><path d="M8 161l2-5M14 161l2-5M6 158l13-3" /><rect x="8" y="165" width="11" height="3" fill="#c4c4c4" />
        <circle cx="25" cy="187" r="3" fill="#c4c4c4" stroke="#b4b4b4" />
      </svg>
    </div>
  </>
);

const DocTabs = () => (
  <div className="flex-1 flex items-start bg-[#d4d0c8] border-t border-[#f0efea] pl-px text-[11px] text-[#222]">
    <div className="flex h-[20px] mt-[2px] border border-[#444] bg-gradient-to-b from-white to-[#dcdcdc]">
      <div className="w-[18px] flex items-center justify-center border-r border-[#444]"><svg width="16" height="15" viewBox="0 0 16 15" fill="#eee" stroke="#333"><rect x=".5" y=".5" width="10" height="8" /><rect x="3" y="3" width="10" height="8" /><rect x="5.500" y="5.500" width="10" height="9" /></svg></div>
      <div className="w-[19px] flex items-center justify-center border-r border-[#444]"><svg width="16" height="14" viewBox="0 0 16 14" fill="none" stroke="#333"><rect x=".5" y=".5" width="6" height="5.500" rx="1" /><rect x="8.500" y=".5" width="6" height="5.500" rx="1" /><rect x=".5" y="8" width="6" height="5.500" rx="1" /><rect x="8.500" y="8" width="6" height="5.500" rx="1" /></svg></div>
      <div className="w-[19px] flex justify-center pt-[5px]"><svg width="9" height="5" viewBox="0 0 9 5"><path d="M0 5l4.500-5L9 5z" fill="#444" /></svg></div>
    </div>
    <div className="w-[108px] h-[19px] ml-px mt-px bg-[#d0d0d0] border border-t-0 border-[#999] border-b-2 rounded-bl-[5px] rounded-br-[3px] flex items-center pl-[8px] whitespace-nowrap tracking-[-0.7px]">PŘEVODOVKA.iam</div>
    <div className="w-[65px] h-[19px] mt-px bg-[#d0d0d0] border border-l-0 border-t-0 border-[#999] border-b-2 rounded-br-[3px] flex items-center pl-[8px] whitespace-nowrap">SKŘÍŇ.ipt</div>
    <div className="w-[94px] h-[19px] mt-px bg-white border border-l-0 border-t-0 border-[#999] border-b-2 rounded-bl-[5px] rounded-br-[5px] flex items-center pl-[8px] gap-[5px] whitespace-nowrap">Сборка1.iam
      <svg width="9" height="9" viewBox="0 0 9 9" fill="none" stroke="#999"><rect x=".5" y=".5" width="8" height="8" /><path d="M2 2l5 5M7 2L2 7" /></svg>
    </div>
  </div>
);

export default function App() {
  return (
    <div className={`${font} w-[1018px] h-[770px] bg-[#2a4d78] flex flex-col pt-[3px] px-[6px] overflow-hidden`}>
      <div className="flex shrink-0">
        <div className="w-[41px] h-[44px] shrink-0 bg-gradient-to-br from-[#d0d0d0] via-[#8c8c8c] to-[#5a5a5a] border border-[#333] relative overflow-hidden">
          <svg width="30" height="38" viewBox="0 0 30 38" className="absolute left-[2px] top-[1px]">
            <path d="M2 6l15-4 1 4-4 2 6 20 5-1 1 4-14 4-1-4 3-1-6-20-4 1z" fill="#e0aa28" stroke="#8a6a18" strokeWidth=".6" />
          </svg>
          <div className="absolute right-[4px] top-[22px]"><Arrow color="#222" /></div>
          <span className="absolute right-[2px] bottom-0 text-[9px] font-bold text-[#333]">PRO</span>
        </div>
        <div className="flex-1 flex flex-col min-w-0">
          <TitleRow />
          <TabRow />
        </div>
      </div>
      <Ribbon />
      <div className="h-px bg-[#888] shrink-0" />
      <div className="flex h-[605px] shrink-0">
        <div className="w-[306px] shrink-0 bg-[#d4d0c8] flex flex-col px-[3px]">
          <div className="h-[16px] flex items-center shrink-0 pt-[3px]">
            <div className="flex-1 h-[5px] border-y border-[#a4a29a] bg-[#ecebe6]" />
            <svg width="10" height="8" viewBox="0 0 10 8" className="ml-[2px]"><path d="M2 1l5 6M7 1L2 7" stroke="#111" strokeWidth="1.500" /></svg>
          </div>
          <div className="h-[20px] shrink-0 bg-[#7f7f7f] flex items-center pl-[8px] pr-[3px] text-[13px] font-bold text-[#f0f0f0] gap-[4px]">
            Model <Arrow color="#eee" />
            <div className="ml-auto w-[13px] h-[15px] bg-[#ffffd8] border border-[#222] rounded-[2px] text-[11px] leading-[13px] font-bold text-[#222] text-center">?</div>
          </div>
          <div className="h-[28px] shrink-0 flex items-center text-[11px] text-[#333]">
            <svg width="18" height="16" viewBox="0 0 18 16" className="ml-[3px]"><path d="M1 1h16L11 8v7l-4-1V8z" fill="#e4e4e4" stroke="#333" /><path d="M1 1h16l-2 2H3z" fill="#999" /></svg>
            <div className="w-px h-[20px] bg-[#a8a69e] ml-[5px] mr-[8px]" />
            <svg width="16" height="14" viewBox="0 0 16 14" className="mr-[3px]"><path d="M7 1L2 4l5 2" fill="none" stroke="#444" /><rect x="9" y="7" width="5" height="3" fill="#a33" /><rect x="4" y="11" width="4" height="3" fill="#fff" stroke="#a33" /></svg>
            <span className="whitespace-nowrap w-[88px]">Zobrazení sestavy</span>
            <div className="ml-[11px]"><Arrow color="#222" /></div>
            <svg width="16" height="14" viewBox="0 0 16 14" className="ml-[7px]"><path d="M3 0h3v3h4V0h3l3 13H9V7H7v6H0z" fill="#111" /><path d="M3 9h2v3H3zM11 9h2v3h-2z" fill="#ddd" /></svg>
          </div>
          <div className="h-[512px] shrink-0 border border-black bg-white flex overflow-hidden">
            <div className="flex-1 flex flex-col overflow-hidden">
              {treeRows.map(([icon, label]) => <TreeRow key={label} icon={icon} label={label} />)}
            </div>
            <div className="w-[17px] shrink-0 flex flex-col bg-[repeating-conic-gradient(#d4d0c8_0_25%,#ffffff_0_50%)] bg-[length:2px_2px]">
              <div className="h-[16px] shrink-0 bg-[#d4d0c8] border border-t-white border-l-white border-r-[#555] border-b-[#555] flex items-center justify-center"><svg width="9" height="5" viewBox="0 0 9 5"><path d="M0 5l4.500-5L9 5z" fill="#111" /></svg></div>
              <div className="h-[114px] shrink-0" />
              <div className="h-[158px] shrink-0 bg-[#d4d0c8] border border-t-white border-l-white border-r-[#555] border-b-[#555]" />
              <div className="flex-1" />
              <div className="h-[16px] shrink-0 bg-[#d4d0c8] border border-t-white border-l-white border-r-[#555] border-b-[#555] flex items-center justify-center"><svg width="9" height="5" viewBox="0 0 9 5"><path d="M0 0l4.500 5L9 0z" fill="#111" /></svg></div>
            </div>
          </div>
        </div>
        <div className="flex-1 flex flex-col min-w-0 bg-[#d4d0c8]">
          <div className="h-[583px] shrink-0 relative bg-white border-l-2 border-[#555] overflow-hidden">
            <ViewportOverlays />
          </div>
          <DocTabs />
        </div>
      </div>
      <div className="h-[21px] shrink-0 bg-[#d4d0c8] border-t border-[#9a9a92] flex items-center pl-px text-[11px] text-[#222]">
        <span className="flex-1 whitespace-nowrap">Posun aktuálního pohledu (klepnout pro zrušení)</span>
        <div className="w-[36px] h-[17px] border border-[#808080] border-r-white border-b-white flex items-center pl-[5px]">170</div>
        <div className="w-[35px] h-[17px] ml-[1px] border border-[#808080] border-r-white border-b-white flex items-center pl-[5px]">175</div>
        <svg width="18" height="17" viewBox="0 0 18 17" className="shrink-0"><path d="M16 5L6 15M16 9l-6 6M16 13l-2 2" stroke="#909088" strokeWidth="1.500" /></svg>
      </div>
      <div className="h-[2px] bg-[#3a3a3a] -mx-[6px] shrink-0" />
    </div>
  );
}
